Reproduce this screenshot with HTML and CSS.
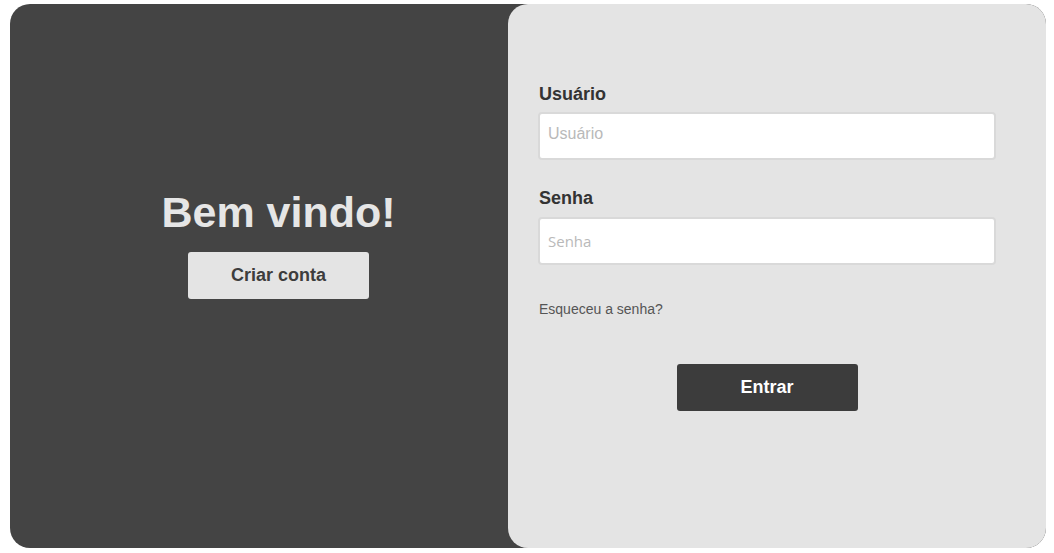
FILE: index.html
```html
<!DOCTYPE html>
<html lang="pt-BR">
<head>
<meta charset="utf-8">
<title>Login</title>
<link rel="stylesheet" href="styles.css">
</head>
<body>
<div class="card">
  <section class="welcome">
    <h1 class="welcome-title">Bem vindo!</h1>
    <button class="btn btn-light" type="button">Criar conta</button>
  </section>
  <section class="login">
    <form class="login-form">
      <label class="field-label" for="user">Usuário</label>
      <input class="field-input field-user" id="user" type="text" placeholder="Usuário">
      <label class="field-label field-label-gap" for="pass">Senha</label>
      <input class="field-input field-password" id="pass" type="password" placeholder="Senha">
      <a class="forgot" href="#">Esqueceu a senha?</a>
      <div class="actions">
        <button class="btn btn-dark" type="button">Entrar</button>
      </div>
    </form>
  </section>
</div>
</body>
</html>
```
FILE: styles.css
```css
* { box-sizing: border-box; }
html, body { margin: 0; padding: 0; background: #ffffff; }
body { font-family: "Liberation Sans", Arial, sans-serif; }

.card {
  display: flex;
  width: 1036px;
  height: 544px;
  margin: 4px 0 0 10px;
  background: #444444;
  border-radius: 20px;
}

.welcome {
  flex: none;
  width: 537px;
  padding-top: 183px;
  display: flex;
  flex-direction: column;
  align-items: center;
}

.welcome-title {
  margin: 0;
  font-size: 43px;
  line-height: 50px;
  font-weight: bold;
  color: #e6e6e6;
}

.btn {
  width: 181px;
  height: 47px;
  border: none;
  border-radius: 3px;
  font-family: "Liberation Sans", Arial, sans-serif;
  font-size: 18px;
  font-weight: bold;
  cursor: pointer;
  padding: 0;
}

.btn-light {
  margin-top: 15px;
  background: #e4e4e4;
  color: #3d3d3d;
}

.btn-dark {
  background: #3c3c3c;
  color: #ffffff;
}

.login {
  flex: none;
  width: 538px;
  margin-left: -39px;
  background: #e4e4e4;
  border-radius: 20px;
  padding: 80px 50px 0 30px;
}

.login-form {
  display: flex;
  flex-direction: column;
}

.field-label {
  display: block;
  font-size: 18px;
  line-height: 21px;
  font-weight: bold;
  color: #333333;
  margin: 0 0 7px 1px;
}

.field-label-gap { margin-top: 28px; margin-bottom: 8px; }

.field-input {
  width: 100%;
  height: 48px;
  border: 2px solid #d9d9d9;
  border-radius: 4px;
  background: #ffffff;
  padding: 0 8px;
  font-family: "Liberation Sans", Arial, sans-serif;
  font-size: 16px;
  color: #333333;
  outline: none;
}

.field-user { padding-bottom: 5px; }

.field-input::placeholder { color: #b9b9b9; }

.field-password {
  font-family: "Open Sans", "Noto Sans", sans-serif;
  font-size: 15px;
  padding-bottom: 1px;
}

.forgot {
  margin-top: 36px;
  margin-left: 1px;
  font-size: 14px;
  line-height: 16px;
  color: #555555;
  text-decoration: none;
}

.actions {
  display: flex;
  justify-content: center;
  margin-top: 47px;
}
```
